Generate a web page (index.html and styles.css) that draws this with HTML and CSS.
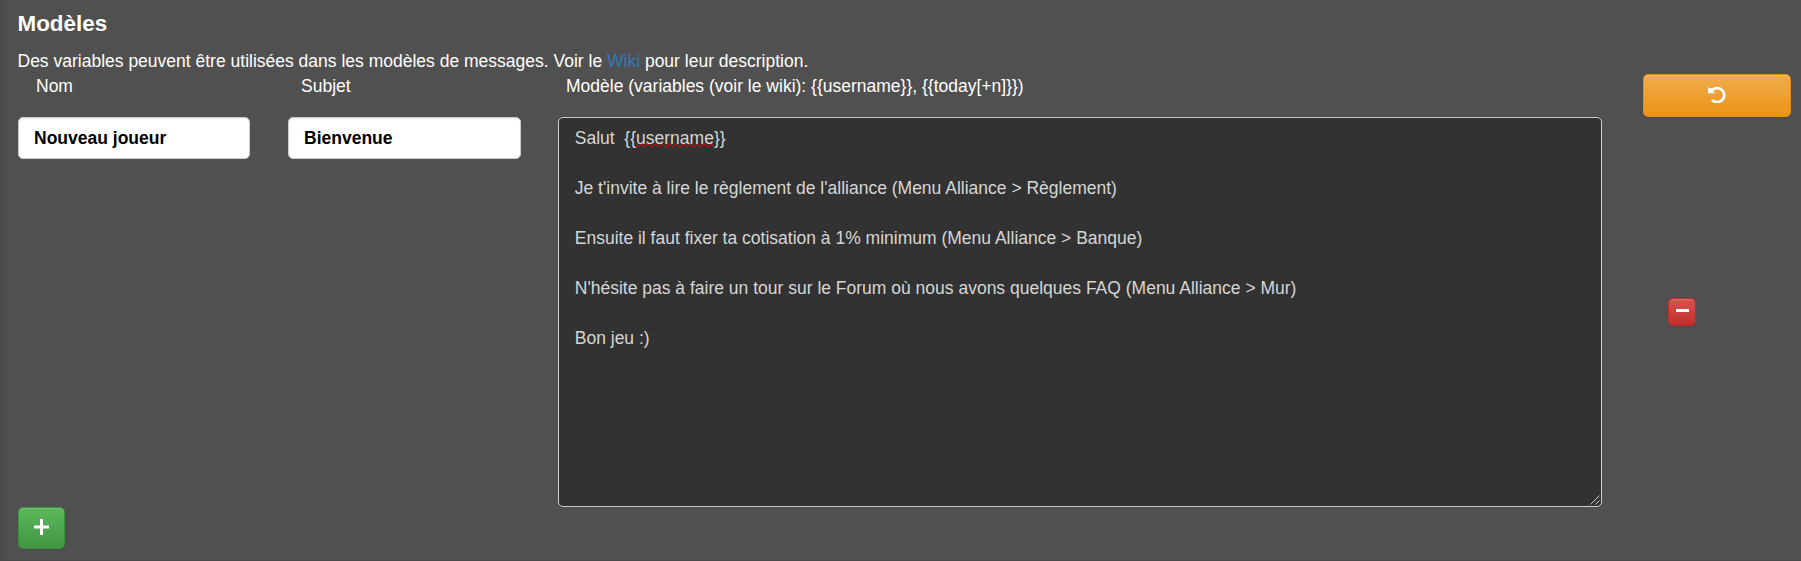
FILE: index.html
```
<!DOCTYPE html>
<html lang="fr">
<head>
<meta charset="utf-8">
<title>Modèles</title>
<link rel="stylesheet" href="styles.css">
</head>
<body>
<main class="panel">
  <h4 class="title">Modèles</h4>
  <p class="intro">Des variables peuvent être utilisées dans les modèles de messages. Voir le <a class="link" href="#">Wiki</a> pour leur description.</p>
  <div class="grid">
    <div class="head">Nom</div>
    <div class="head">Subjet</div>
    <div class="head head-model">Modèle (variables (voir le wiki): {{username}}, {{today[+n]}})</div>
    <button class="btn btn-warning" aria-label="Réinitialiser">
      <svg class="icon" width="18" height="17" viewBox="0 0 18 17"><path d="M4.500 4A7 7 0 1 1 4 13.800" fill="none" stroke="#fff" stroke-width="2.700"/><path d="M0 1L2 2.600 4.500 2 5 5 7 7.200H0z" fill="#fff"/></svg>
    </button>
    <input class="input" type="text" value="Nouveau joueur">
    <input class="input" type="text" value="Bienvenue">
    <div class="editor">Salut  {{<span class="misspelt">username</span>}}

Je t'invite à lire le règlement de l'alliance (Menu Alliance &gt; Règlement)

Ensuite il faut fixer ta cotisation à 1% minimum (Menu Alliance &gt; Banque)

N'hésite pas à faire un tour sur le Forum où nous avons quelques FAQ (Menu Alliance &gt; Mur)

Bon jeu :)<svg class="grip" width="10" height="10" viewBox="0 0 10 10"><path d="M.5 9.5l9-9M5.5 9.5l4-4" stroke="#ccc" fill="none"/></svg></div>
    <button class="btn btn-danger" aria-label="Supprimer">
      <svg class="icon" width="13" height="3" viewBox="0 0 13 3"><rect width="13" height="3" rx=".5" fill="#fff"/></svg>
    </button>
  </div>
  <button class="btn btn-success" aria-label="Ajouter">
    <svg class="icon" width="15" height="16" viewBox="0 0 15 16"><path d="M6 0h3v6.400h6v3H9V16H6V9.400H0v-3h6z" fill="#fff"/></svg>
  </button>
</main>
</body>
</html>
```
FILE: styles.css
```
* { box-sizing: border-box; }
body {
  margin: 0;
  padding-left: 5px;
  height: 561px;
  overflow: hidden;
  background: #4b4b4b;
  color: #fff;
  font: 17.5px/25px "Liberation Sans", Arial, sans-serif;
}
.panel {
  height: 560px;
  padding: 11px 10px 0 13px;
  background: #505050;
  border-radius: 0 0 0 5px;
}
.title {
  margin: 0 0 13px -0.5px;
  font-size: 22.4px;
  line-height: 25px;
}
.intro { margin: 0 0 0 -0.5px; }
.link { color: #337ab7; text-decoration: none; }
.grid {
  display: grid;
  grid-template-columns: 232px 233px 1044px 148px;
  grid-template-rows: 43px 390px;
  column-gap: 38px;
}
.head { padding-left: 18px; }
.head:nth-child(2) { padding-left: 13px; }
.head-model { padding-left: 8.5px; margin-left: -1.5px; }
.input {
  width: 100%;
  height: 42px;
  padding: 0 15px;
  border: 1px solid #ccc;
  border-radius: 5px;
  background: #fff;
  box-shadow: inset 0 1px 1px rgba(0, 0, 0, .075);
  color: #000;
  font: bold 17.5px/25px "Liberation Sans", Arial, sans-serif;
}
.editor {
  position: relative;
  height: 390px;
  margin: 0 1px 0 -1px;
  padding: 8px 15px 8px 15.75px;
  border: 1px solid #ccc;
  border-radius: 5px;
  background: #323232;
  color: #d6d6d6;
  white-space: pre-wrap;
}
.misspelt {
  text-decoration: underline wavy #f00 1.2px;
  text-underline-offset: -1px;
  text-decoration-skip-ink: none;
}
.grip { position: absolute; right: 1px; bottom: 1px; }
.btn {
  display: flex;
  align-items: center;
  justify-content: center;
  padding: 0;
  border: 1px solid;
  border-radius: 5px;
  box-shadow: inset 0 1px 0 rgba(255, 255, 255, .15), 0 1px 1px rgba(0, 0, 0, .075);
}
.btn-warning {
  height: 43px;
  margin: 0 -2px 0 2px;
  border-color: #e38d13;
  background: linear-gradient(#f0ad4e, #eb9316);
}
.btn-warning .icon { margin-bottom: 2px; }
.btn-danger {
  align-self: center;
  width: 28px;
  height: 28px;
  margin-left: 27px;
  padding-bottom: 3px;
  border-color: #b92c28;
  background: linear-gradient(#d9534f, #c12e2a);
}
.btn-success {
  width: 47px;
  height: 42px;
  padding-bottom: 2px;
  border-color: #3e8f3e;
  background: linear-gradient(#5cb85c, #419641);
}
```
